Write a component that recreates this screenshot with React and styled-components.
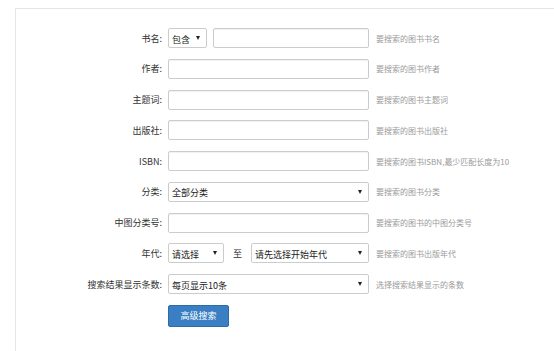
import React from 'react';
import styled, { createGlobalStyle } from 'styled-components';

const GlobalStyle = createGlobalStyle`
  html, body { margin: 0; padding: 0; background: #fff; }
  body { font-family: "Noto Sans CJK SC", "Noto Sans", sans-serif; overflow: hidden; }
`;

const rows = [
  { label: '书名:', kind: 'title', help: '要搜索的图书书名' },
  { label: '作者:', kind: 'text', help: '要搜索的图书作者' },
  { label: '主题词:', kind: 'text', help: '要搜索的图书主题词' },
  { label: '出版社:', kind: 'text', help: '要搜索的图书出版社' },
  { label: 'ISBN:', kind: 'text', help: '要搜索的图书ISBN,最少匹配长度为10' },
  { label: '分类:', kind: 'select', value: '全部分类', help: '要搜索的图书分类' },
  { label: '中图分类号:', kind: 'text', help: '要搜索的图书的中图分类号' },
  { label: '年代:', kind: 'year', help: '要搜索的图书出版年代' },
  { label: '搜索结果显示条数:', kind: 'select', value: '每页显示10条', help: '选择搜索结果显示的条数' },
];

function Select({ value, width }) {
  return (
    <SelectBox $width={width}>
      <span>{value}</span>
      <Caret />
    </SelectBox>
  );
}

function Control({ row }) {
  if (row.kind === 'title') {
    return (
      <Inline>
        <Select value="包含" width={39} />
        <TextInput style={{ width: 156 }} />
      </Inline>
    );
  }
  if (row.kind === 'year') {
    return (
      <Inline>
        <Select value="请选择" width={56} />
        <To>至</To>
        <Select value="请先选择开始年代" width={118} />
      </Inline>
    );
  }
  if (row.kind === 'select') return <Select value={row.value} width={201} />;
  return <TextInput />;
}

export default function App() {
  return (
    <>
      <GlobalStyle />
      <Panel>
        <Form>
          {rows.map((r) => (
            <Row key={r.label}>
              <Label>{r.label}</Label>
              <Control row={r} />
              <Help>{r.help}</Help>
            </Row>
          ))}
          <Row>
            <span />
            <SearchButton>高级搜索</SearchButton>
          </Row>
        </Form>
      </Panel>
    </>
  );
}

const Panel = styled.div`
  box-sizing: border-box;
  margin: 8px 0 0 15px;
  height: calc(100vh - 8px);
  border-top: 1px solid #e6e6e6;
  border-left: 1px solid #e6e6e6;
`;

const Form = styled.div`
  padding-top: 19px;
  display: flex;
  flex-direction: column;
  gap: 10.75px;
`;

const Row = styled.div`
  display: grid;
  grid-template-columns: 148px 201px auto;
  column-gap: 4px;
  align-items: center;
  min-height: 20px;
`;

const Label = styled.div`
  padding-right: 2px;
  text-align: right;
  font-size: 9px;
  color: #333;
  white-space: nowrap;
`;

const Help = styled.div`
  margin-left: 3px;
  font-size: 8px;
  color: #9a9a9a;
  white-space: nowrap;
`;

const Inline = styled.div`
  display: flex;
  align-items: center;
  justify-content: space-between;
`;

const TextInput = styled.input`
  box-sizing: border-box;
  width: 201px;
  height: 20px;
  margin: 0;
  border: 1px solid #ccc;
  border-radius: 2px;
  box-shadow: inset 0 1px 1px rgba(0, 0, 0, 0.06);
  outline: none;
`;

const SelectBox = styled.div`
  box-sizing: border-box;
  width: ${(p) => p.$width}px;
  height: 20px;
  border: 1px solid #ccc;
  border-radius: 2px;
  padding: 2px 6px 0 3px;
  display: flex;
  align-items: center;
  justify-content: space-between;
  font-size: 9px;
  color: #222;
  white-space: nowrap;
`;

const Caret = styled.i`
  width: 0;
  height: 0;
  border-left: 2px solid transparent;
  border-right: 2px solid transparent;
  border-top: 4px solid #222;
  margin-top: -2px;
`;

const To = styled.span`
  font-size: 9px;
  color: #333;
`;

const SearchButton = styled.button`
  box-sizing: border-box;
  width: 61px;
  height: 22px;
  padding: 0;
  border: 1px solid #2e6da4;
  border-radius: 2px;
  background: #3a7fc4;
  color: #fff;
  font-family: inherit;
  font-size: 9px;
`;
